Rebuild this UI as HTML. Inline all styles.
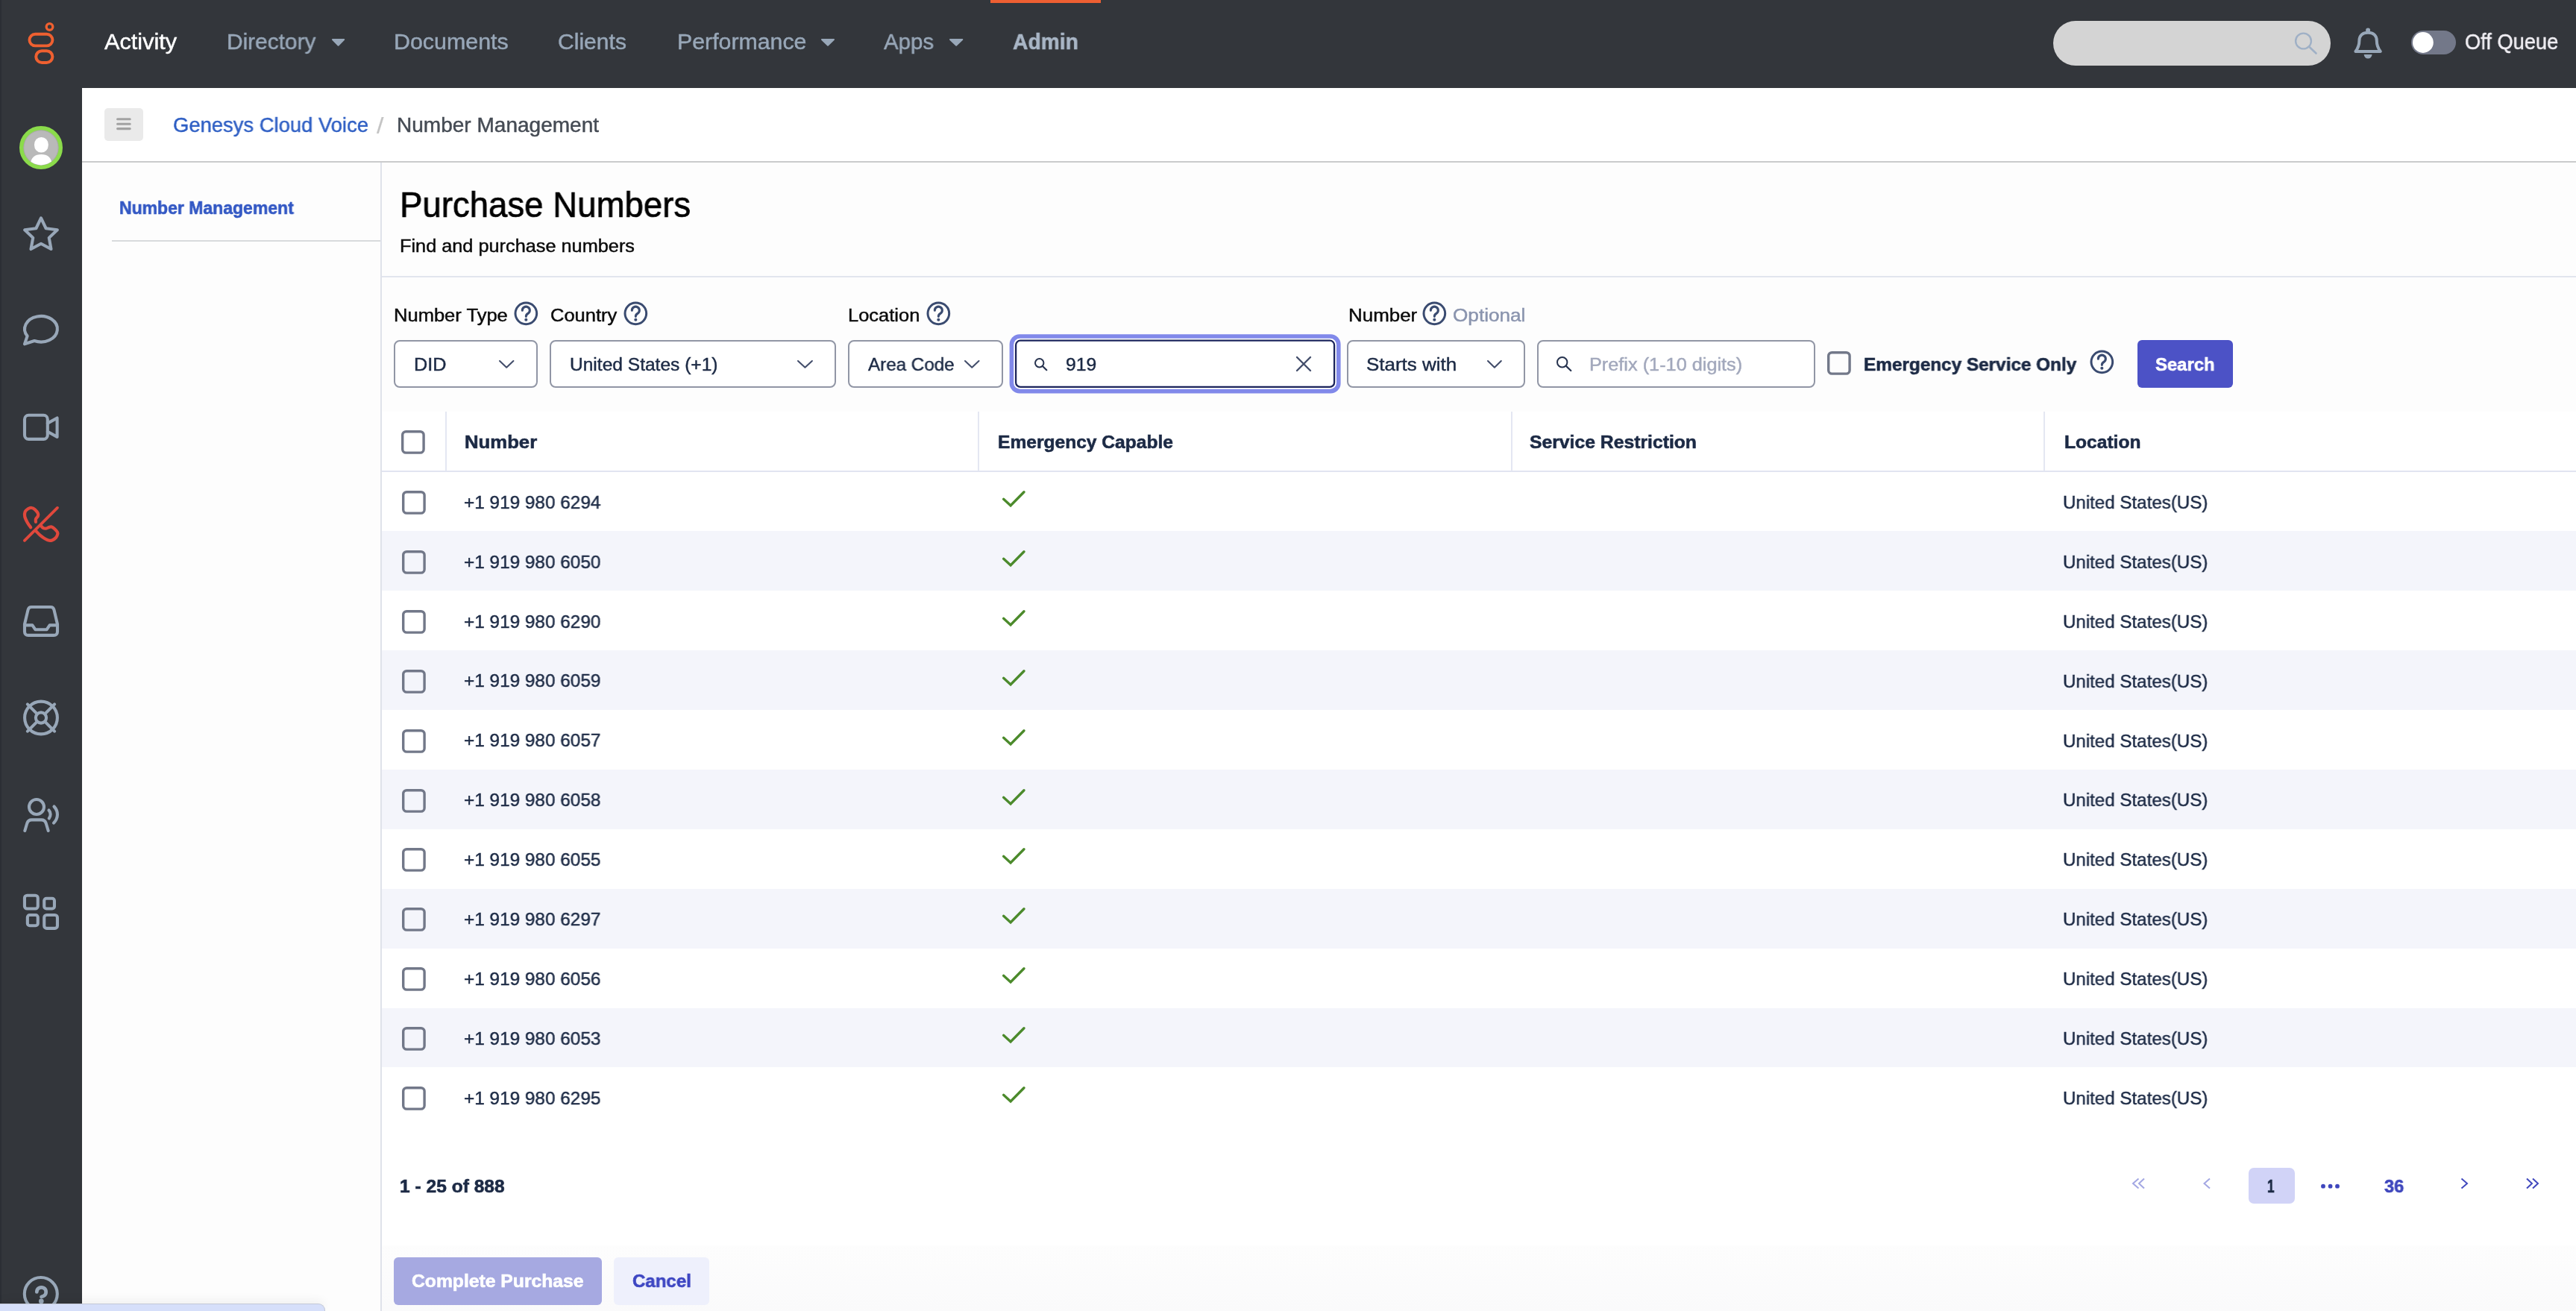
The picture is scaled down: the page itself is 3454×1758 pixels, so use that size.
<!DOCTYPE html>
<html><head><meta charset="utf-8"><title>Number Management</title>
<style>
html,body{margin:0;padding:0;background:#fdfdfd;}
html{width:3454px;height:1758px;overflow:hidden;}
body{width:3454px;height:1758px;position:relative;overflow:hidden;font-family:"Liberation Sans",sans-serif;}
.b{position:absolute;display:block;}
.t{position:absolute;white-space:nowrap;line-height:1;transform-origin:0 0;will-change:transform;}
</style></head><body>
<div class="b" style="left:110px;top:118px;width:3344px;height:1640px;background:#fdfdfd"></div>
<div class="b" style="left:110px;top:118px;width:3344px;height:97.5px;background:#ffffff"></div>
<div class="b" style="left:110px;top:215.5px;width:3344px;height:2px;background:#cacbcc"></div>
<div class="b" style="left:510px;top:217.5px;width:2px;height:1540.5px;background:#dfe2ea"></div>
<div class="b" style="left:150px;top:322px;width:360px;height:2px;background:#d8dadd"></div>
<div class="b" style="left:512px;top:369.5px;width:2942px;height:2px;background:#e2e5ee"></div>
<div class="b" style="left:512px;top:1670px;width:2942px;height:88px;background:linear-gradient(180deg,#fdfdfd,#fafafb)"></div>
<div class="b" style="left:512px;top:552px;width:2942px;height:1118px;background:#ffffff"></div>
<div class="b" style="left:512px;top:631px;width:2942px;height:2px;background:#e1e4f1"></div>
<div class="b" style="left:597px;top:552px;width:2px;height:79px;background:#e4e7f2"></div>
<div class="b" style="left:1311px;top:552px;width:2px;height:79px;background:#e4e7f2"></div>
<div class="b" style="left:2026px;top:552px;width:2px;height:79px;background:#e4e7f2"></div>
<div class="b" style="left:2740px;top:552px;width:2px;height:79px;background:#e4e7f2"></div>
<svg class="b" style="left:537.6px;top:657.1px" width="33.8" height="33.8" viewBox="537.6 657.1 33.8 33.8" ><rect x="540.3" y="659.8" width="28.4" height="28.4" rx="4.6" fill="none" stroke="#727889" stroke-width="3.4"/></svg>
<svg class="b" style="left:1341.4px;top:655.2px" width="36.8" height="27.8" viewBox="1341.4 655.2 36.8 27.8" ><path d="M1346 669.536 L1355.49 678.2 L1373.4 660" fill="none" stroke="#4b8a2b" stroke-width="3.4" stroke-linecap="round" stroke-linejoin="miter"/></svg>
<div class="b" style="left:512px;top:711.95px;width:2942px;height:79.95px;background:#f4f5fb"></div>
<svg class="b" style="left:537.6px;top:736.98px" width="33.8" height="33.8" viewBox="537.6 736.98 33.8 33.8" ><rect x="540.3" y="739.68" width="28.4" height="28.4" rx="4.6" fill="none" stroke="#727889" stroke-width="3.4"/></svg>
<svg class="b" style="left:1341.4px;top:735.08px" width="36.8" height="27.8" viewBox="1341.4 735.08 36.8 27.8" ><path d="M1346 749.416 L1355.49 758.08 L1373.4 739.88" fill="none" stroke="#4b8a2b" stroke-width="3.4" stroke-linecap="round" stroke-linejoin="miter"/></svg>
<svg class="b" style="left:537.6px;top:816.86px" width="33.8" height="33.8" viewBox="537.6 816.86 33.8 33.8" ><rect x="540.3" y="819.56" width="28.4" height="28.4" rx="4.6" fill="none" stroke="#727889" stroke-width="3.4"/></svg>
<svg class="b" style="left:1341.4px;top:814.96px" width="36.8" height="27.8" viewBox="1341.4 814.96 36.8 27.8" ><path d="M1346 829.296 L1355.49 837.96 L1373.4 819.76" fill="none" stroke="#4b8a2b" stroke-width="3.4" stroke-linecap="round" stroke-linejoin="miter"/></svg>
<div class="b" style="left:512px;top:871.85px;width:2942px;height:79.95px;background:#f4f5fb"></div>
<svg class="b" style="left:537.6px;top:896.74px" width="33.8" height="33.8" viewBox="537.6 896.74 33.8 33.8" ><rect x="540.3" y="899.44" width="28.4" height="28.4" rx="4.6" fill="none" stroke="#727889" stroke-width="3.4"/></svg>
<svg class="b" style="left:1341.4px;top:894.84px" width="36.8" height="27.8" viewBox="1341.4 894.84 36.8 27.8" ><path d="M1346 909.176 L1355.49 917.84 L1373.4 899.64" fill="none" stroke="#4b8a2b" stroke-width="3.4" stroke-linecap="round" stroke-linejoin="miter"/></svg>
<svg class="b" style="left:537.6px;top:976.62px" width="33.8" height="33.8" viewBox="537.6 976.62 33.8 33.8" ><rect x="540.3" y="979.32" width="28.4" height="28.4" rx="4.6" fill="none" stroke="#727889" stroke-width="3.4"/></svg>
<svg class="b" style="left:1341.4px;top:974.72px" width="36.8" height="27.8" viewBox="1341.4 974.72 36.8 27.8" ><path d="M1346 989.056 L1355.49 997.72 L1373.4 979.52" fill="none" stroke="#4b8a2b" stroke-width="3.4" stroke-linecap="round" stroke-linejoin="miter"/></svg>
<div class="b" style="left:512px;top:1031.75px;width:2942px;height:79.95px;background:#f4f5fb"></div>
<svg class="b" style="left:537.6px;top:1056.5px" width="33.8" height="33.8" viewBox="537.6 1056.5 33.8 33.8" ><rect x="540.3" y="1059.2" width="28.4" height="28.4" rx="4.6" fill="none" stroke="#727889" stroke-width="3.4"/></svg>
<svg class="b" style="left:1341.4px;top:1054.6px" width="36.8" height="27.8" viewBox="1341.4 1054.6 36.8 27.8" ><path d="M1346 1068.94 L1355.49 1077.6 L1373.4 1059.4" fill="none" stroke="#4b8a2b" stroke-width="3.4" stroke-linecap="round" stroke-linejoin="miter"/></svg>
<svg class="b" style="left:537.6px;top:1136.38px" width="33.8" height="33.8" viewBox="537.6 1136.38 33.8 33.8" ><rect x="540.3" y="1139.08" width="28.4" height="28.4" rx="4.6" fill="none" stroke="#727889" stroke-width="3.4"/></svg>
<svg class="b" style="left:1341.4px;top:1134.48px" width="36.8" height="27.8" viewBox="1341.4 1134.48 36.8 27.8" ><path d="M1346 1148.82 L1355.49 1157.48 L1373.4 1139.28" fill="none" stroke="#4b8a2b" stroke-width="3.4" stroke-linecap="round" stroke-linejoin="miter"/></svg>
<div class="b" style="left:512px;top:1191.65px;width:2942px;height:79.95px;background:#f4f5fb"></div>
<svg class="b" style="left:537.6px;top:1216.26px" width="33.8" height="33.8" viewBox="537.6 1216.26 33.8 33.8" ><rect x="540.3" y="1218.96" width="28.4" height="28.4" rx="4.6" fill="none" stroke="#727889" stroke-width="3.4"/></svg>
<svg class="b" style="left:1341.4px;top:1214.36px" width="36.8" height="27.8" viewBox="1341.4 1214.36 36.8 27.8" ><path d="M1346 1228.7 L1355.49 1237.36 L1373.4 1219.16" fill="none" stroke="#4b8a2b" stroke-width="3.4" stroke-linecap="round" stroke-linejoin="miter"/></svg>
<svg class="b" style="left:537.6px;top:1296.14px" width="33.8" height="33.8" viewBox="537.6 1296.14 33.8 33.8" ><rect x="540.3" y="1298.84" width="28.4" height="28.4" rx="4.6" fill="none" stroke="#727889" stroke-width="3.4"/></svg>
<svg class="b" style="left:1341.4px;top:1294.24px" width="36.8" height="27.8" viewBox="1341.4 1294.24 36.8 27.8" ><path d="M1346 1308.58 L1355.49 1317.24 L1373.4 1299.04" fill="none" stroke="#4b8a2b" stroke-width="3.4" stroke-linecap="round" stroke-linejoin="miter"/></svg>
<div class="b" style="left:512px;top:1351.55px;width:2942px;height:79.95px;background:#f4f5fb"></div>
<svg class="b" style="left:537.6px;top:1376.02px" width="33.8" height="33.8" viewBox="537.6 1376.02 33.8 33.8" ><rect x="540.3" y="1378.72" width="28.4" height="28.4" rx="4.6" fill="none" stroke="#727889" stroke-width="3.4"/></svg>
<svg class="b" style="left:1341.4px;top:1374.12px" width="36.8" height="27.8" viewBox="1341.4 1374.12 36.8 27.8" ><path d="M1346 1388.46 L1355.49 1397.12 L1373.4 1378.92" fill="none" stroke="#4b8a2b" stroke-width="3.4" stroke-linecap="round" stroke-linejoin="miter"/></svg>
<svg class="b" style="left:537.6px;top:1455.9px" width="33.8" height="33.8" viewBox="537.6 1455.9 33.8 33.8" ><rect x="540.3" y="1458.6" width="28.4" height="28.4" rx="4.6" fill="none" stroke="#727889" stroke-width="3.4"/></svg>
<svg class="b" style="left:1341.4px;top:1454px" width="36.8" height="27.8" viewBox="1341.4 1454 36.8 27.8" ><path d="M1346 1468.34 L1355.49 1477 L1373.4 1458.8" fill="none" stroke="#4b8a2b" stroke-width="3.4" stroke-linecap="round" stroke-linejoin="miter"/></svg>
<svg class="b" style="left:537px;top:576px" width="33.8" height="33.8" viewBox="537 576 33.8 33.8" ><rect x="539.7" y="578.7" width="28.4" height="28.4" rx="4.6" fill="none" stroke="#727889" stroke-width="3.4"/></svg>
<div class="b" style="left:0px;top:0px;width:3454px;height:118px;background:#33363b"></div>
<div class="b" style="left:0px;top:0px;width:110px;height:1758px;background:#33363b"></div>
<div class="b" style="left:0px;top:0px;width:1.5px;height:1758px;background:#2b2e34"></div>
<div class="b" style="left:1328px;top:0px;width:148px;height:4px;background:#ee5f32"></div>
<svg class="b" style="left:443.8px;top:51px" width="19.2" height="12" viewBox="443.8 51 19.2 12" ><path d="M445.8 53 L461 53 L453.4 60.8 Z" fill="#98a7b8" stroke="#98a7b8" stroke-width="2" stroke-linejoin="round"/></svg>
<svg class="b" style="left:1099.6px;top:51px" width="20" height="12" viewBox="1099.6 51 20 12" ><path d="M1101.6 53 L1117.6 53 L1109.6 60.8 Z" fill="#98a7b8" stroke="#98a7b8" stroke-width="2" stroke-linejoin="round"/></svg>
<svg class="b" style="left:1272.3px;top:51px" width="20.3" height="12" viewBox="1272.3 51 20.3 12" ><path d="M1274.3 53 L1290.6 53 L1282.45 60.8 Z" fill="#98a7b8" stroke="#98a7b8" stroke-width="2" stroke-linejoin="round"/></svg>
<div class="b" style="left:2753px;top:28px;width:372px;height:60px;background:#d4d4d4;border-radius:30px"></div>
<svg class="b" style="left:3070px;top:36px" width="44" height="44" viewBox="3070 36 44 44" ><circle cx="3088.5" cy="55" r="10.4" fill="none" stroke="#9fb0c6" stroke-width="2.4"/><path d="M3096 62.5 L3105.5 71.5" stroke="#9fb0c6" stroke-width="2.6" stroke-linecap="round"/></svg>
<svg class="b" style="left:3150px;top:32px" width="50" height="52" viewBox="3150 32 50 52" ><path d="M3158.4 68.9 C3162.9 63.4 3163.4 59 3163.4 54.6 C3163.4 47.2 3168 43.7 3175.1 43.7 C3182.2 43.7 3186.8 47.2 3186.8 54.6 C3186.8 59 3187.3 63.4 3191.8 68.9 Z" fill="none" stroke="#98a7b8" stroke-width="4" stroke-linejoin="round"/><circle cx="3175.1" cy="40.6" r="3" fill="#98a7b8"/><path d="M3169.7 73.1 A5.4 5.4 0 0 0 3180.5 73.1 Z" fill="#98a7b8"/></svg>
<div class="b" style="left:3233px;top:41px;width:60px;height:32px;background:#737889;border-radius:16px"></div>
<svg class="b" style="left:3232px;top:40px" width="34" height="34" viewBox="3232 40 34 34" ><circle cx="3248.9" cy="57" r="13.9" fill="#fff"/></svg>
<div class="b" style="left:140px;top:145px;width:52px;height:44px;background:#eaeaea;border-radius:5px"></div>
<svg class="b" style="left:150px;top:152px" width="32" height="30" viewBox="150 152 32 30" ><path d="M157.6 159.8 H174.2 M157.6 166.2 H174.2 M157.6 172.6 H174.2" stroke="#a2a2a2" stroke-width="3.1" stroke-linecap="round"/></svg>
<svg class="b" style="left:30px;top:24px" width="52" height="68" viewBox="30 24 52 68" ><circle cx="66.5" cy="35.9" r="4.3" fill="none" stroke="#ef6030" stroke-width="3.4"/><rect x="39.45" y="45.8" width="31" height="15.55" rx="7.78" fill="none" stroke="#ef6030" stroke-width="3.9"/><rect x="48.25" y="68.2" width="22.15" height="15.8" rx="7.9" fill="none" stroke="#ef6030" stroke-width="4"/></svg>
<svg class="b" style="left:22px;top:165px" width="66" height="66" viewBox="22 165 66 66" ><defs><clipPath id="avc"><circle cx="55" cy="198" r="23.4"/></clipPath></defs><circle cx="55" cy="198" r="26.2" fill="#b9b9b9" stroke="#8bdb4b" stroke-width="5.6"/><circle cx="55" cy="198" r="23.2" fill="none" stroke="#a3a3a3" stroke-width="0.8"/><g clip-path="url(#avc)"><rect x="46" y="183.9" width="18.8" height="20.7" rx="9.2" ry="9.8" fill="#fff"/><path d="M40.2 226 C40.2 211.5 46 207 55.3 207 C64.6 207 70.2 211.5 70.2 226 Z" fill="#fff"/></g></svg>
<svg class="b" style="left:28px;top:286px" width="54" height="54" viewBox="28 286 54 54" ><path d="M55.00 292.40 L61.64 306.26 L76.87 308.29 L65.75 318.89 L68.52 334.01 L55.00 326.70 L41.48 334.01 L44.25 318.89 L33.13 308.29 L48.36 306.26 Z" fill="none" stroke="#98a7b8" stroke-width="4.1" stroke-linecap="round" stroke-linejoin="round"/></svg>
<svg class="b" style="left:26px;top:416px" width="58" height="54" viewBox="26 416 58 54" ><path d="M36.63 450.62 A21.9 17.3 0 1 1 46.09 457.00 L33 461.3 Z" fill="none" stroke="#98a7b8" stroke-width="4.1" stroke-linecap="round" stroke-linejoin="round"/></svg>
<svg class="b" style="left:26px;top:548px" width="58" height="50" viewBox="26 548 58 50" ><rect x="33" y="556.8" width="30.8" height="32.1" rx="5.4" fill="none" stroke="#98a7b8" stroke-width="4.1" stroke-linecap="round" stroke-linejoin="round"/><path d="M63.8 567.6 L76.6 560.5 L76.6 585.9 L63.8 578.8" fill="none" stroke="#98a7b8" stroke-width="4.1" stroke-linecap="round" stroke-linejoin="round"/></svg>
<svg class="b" style="left:26px;top:672px" width="58" height="62" viewBox="26 672 58 62" ><path d="M41.20 707.30 C40.43 706.17 37.93 702.97 36.60 700.50 C35.27 698.03 33.68 694.88 33.20 692.50 C32.72 690.12 32.95 687.92 33.70 686.20 C34.45 684.48 36.27 683.07 37.70 682.20 C39.13 681.33 40.77 680.82 42.30 681.00 C43.83 681.18 45.47 682.07 46.90 683.30 C48.33 684.53 50.23 686.97 50.90 688.40 C51.57 689.83 51.38 690.65 50.90 691.90 C50.42 693.15 48.50 694.57 48.00 695.90 C47.50 697.23 47.92 699.23 47.90 699.90" fill="none" stroke="#e0483c" stroke-width="4.2" stroke-linecap="round" stroke-linejoin="round"/><path d="M54.90 705.00 C55.37 705.48 56.57 707.28 57.70 707.90 C58.83 708.52 60.35 708.85 61.70 708.70 C63.05 708.55 64.55 707.37 65.80 707.00 C67.05 706.63 67.97 706.12 69.20 706.50 C70.43 706.88 71.92 708.12 73.20 709.30 C74.48 710.48 76.23 712.40 76.90 713.60 C77.57 714.80 77.53 715.27 77.20 716.50 C76.87 717.73 76.05 719.72 74.90 721.00 C73.75 722.28 71.82 723.57 70.30 724.20 C68.78 724.83 67.52 725.13 65.80 724.80 C64.08 724.47 61.92 723.30 60.00 722.20 C58.08 721.10 56.02 719.63 54.30 718.20 C52.58 716.77 50.75 714.70 49.70 713.60 C48.65 712.50 48.28 711.93 48.00 711.60" fill="none" stroke="#e0483c" stroke-width="4.2" stroke-linecap="round" stroke-linejoin="round"/><path d="M32.9 724.8 L77 680.9" fill="none" stroke="#e0483c" stroke-width="3.8" stroke-linecap="round"/></svg>
<svg class="b" style="left:26px;top:806px" width="58" height="54" viewBox="26 806 58 54" ><path d="M33 837 L37.6 817.6 C38.2 815.2 39.8 814 42.2 814 L67.8 814 C70.2 814 71.8 815.2 72.4 817.6 L77 837 L77 847 C77 850 75.2 851.9 72.2 851.9 L37.8 851.9 C34.8 851.9 33 850 33 847 Z" fill="none" stroke="#98a7b8" stroke-width="4.1" stroke-linecap="round" stroke-linejoin="round"/><path d="M34 838.4 L43.4 838.4 L47.3 844.2 L62.7 844.2 L66.6 838.4 L76 838.4" fill="none" stroke="#98a7b8" stroke-width="4.1" stroke-linecap="round" stroke-linejoin="round"/></svg>
<svg class="b" style="left:26px;top:934px" width="58" height="58" viewBox="26 934 58 58" ><circle cx="55" cy="962.5" r="21.9" fill="none" stroke="#98a7b8" stroke-width="4.1" stroke-linecap="round" stroke-linejoin="round"/><circle cx="55" cy="962.5" r="7.1" fill="none" stroke="#98a7b8" stroke-width="4.1" stroke-linecap="round" stroke-linejoin="round"/><path d="M60.66 968.16 L73.10 980.60 M49.34 968.16 L36.90 980.60 M49.34 956.84 L36.90 944.40 M60.66 956.84 L73.10 944.40 " fill="none" stroke="#98a7b8" stroke-width="4.1" stroke-linecap="round" stroke-linejoin="round"/></svg>
<svg class="b" style="left:28px;top:1064px" width="54" height="58" viewBox="28 1064 54 58" ><circle cx="49" cy="1082" r="10" fill="none" stroke="#98a7b8" stroke-width="4.1" stroke-linecap="round" stroke-linejoin="round"/><path d="M33.3 1114 L36.3 1104 C37.5 1100.6 39.6 1099.4 42.6 1099.4 L55.4 1099.4 C58.4 1099.4 60.5 1100.6 61.7 1104 L64.7 1114" fill="none" stroke="#98a7b8" stroke-width="4.1" stroke-linecap="round" stroke-linejoin="round"/><path d="M65.5 1086.5 C68.3 1089.5 68.3 1094.3 65.8 1097.4" fill="none" stroke="#98a7b8" stroke-width="4.1" stroke-linecap="round" stroke-linejoin="round"/><path d="M72.5 1081.5 C78.5 1088 78.5 1096.8 72 1103.6" fill="none" stroke="#98a7b8" stroke-width="4.1" stroke-linecap="round" stroke-linejoin="round"/></svg>
<svg class="b" style="left:28px;top:1194px" width="56" height="58" viewBox="28 1194 56 58" ><rect x="32.95" y="1200.8" width="17.8" height="17.75" rx="3.4" fill="none" stroke="#98a7b8" stroke-width="4.1" stroke-linecap="round" stroke-linejoin="round"/><rect x="59.25" y="1204.75" width="13.7" height="13.8" rx="3" fill="none" stroke="#98a7b8" stroke-width="4.1" stroke-linecap="round" stroke-linejoin="round"/><rect x="36.85" y="1227.05" width="13.9" height="14.2" rx="3" fill="none" stroke="#98a7b8" stroke-width="4.1" stroke-linecap="round" stroke-linejoin="round"/><rect x="59.25" y="1227.05" width="17.7" height="17.8" rx="3.4" fill="none" stroke="#98a7b8" stroke-width="4.1" stroke-linecap="round" stroke-linejoin="round"/></svg>
<svg class="b" style="left:26px;top:1705px" width="58" height="53" viewBox="26 1705 58 53" ><circle cx="54.8" cy="1735" r="22" fill="none" stroke="#98a7b8" stroke-width="4.1" stroke-linecap="round" stroke-linejoin="round"/><path d="M49.3 1732.4 a6.2 6.1 0 1 1 9.3 5.3 c-1.9 1.1 -3.1 1.1 -3.1 1.4" fill="none" stroke="#98a7b8" stroke-width="4.7" stroke-linecap="round" stroke-linejoin="round"/><circle cx="55.3" cy="1744.9" r="3.3" fill="#98a7b8"/></svg>
<div class="b" style="left:0px;top:1747.5px;width:436px;height:10.5px;background:#d6dffa;border-top:1.5px solid #c3c8d6;border-right:1.5px solid #c3c8d6;border-top-right-radius:9px;box-sizing:border-box;box-shadow:0 -3px 14px rgba(0,0,0,0.07)"></div>
<svg class="b" style="left:687.65px;top:402.65px" width="34.7" height="34.7" viewBox="687.65 402.65 34.7 34.7" ><circle cx="705" cy="420" r="14.35" fill="none" stroke="#3a4b70" stroke-width="3"/><path d="M700 415.8 a5 5 0 1 1 7.6 4.3 c-1.8 1.1 -2.6 2 -2.6 3.9" fill="none" stroke="#3a4b70" stroke-width="3.1" stroke-linecap="round"/><circle cx="705" cy="428.4" r="2.05" fill="#3a4b70"/></svg>
<svg class="b" style="left:834.65px;top:402.65px" width="34.7" height="34.7" viewBox="834.65 402.65 34.7 34.7" ><circle cx="852" cy="420" r="14.35" fill="none" stroke="#3a4b70" stroke-width="3"/><path d="M847 415.8 a5 5 0 1 1 7.6 4.3 c-1.8 1.1 -2.6 2 -2.6 3.9" fill="none" stroke="#3a4b70" stroke-width="3.1" stroke-linecap="round"/><circle cx="852" cy="428.4" r="2.05" fill="#3a4b70"/></svg>
<svg class="b" style="left:1240.65px;top:402.65px" width="34.7" height="34.7" viewBox="1240.65 402.65 34.7 34.7" ><circle cx="1258" cy="420" r="14.35" fill="none" stroke="#3a4b70" stroke-width="3"/><path d="M1253 415.8 a5 5 0 1 1 7.6 4.3 c-1.8 1.1 -2.6 2 -2.6 3.9" fill="none" stroke="#3a4b70" stroke-width="3.1" stroke-linecap="round"/><circle cx="1258" cy="428.4" r="2.05" fill="#3a4b70"/></svg>
<svg class="b" style="left:1906.45px;top:402.65px" width="34.7" height="34.7" viewBox="1906.45 402.65 34.7 34.7" ><circle cx="1923.8" cy="420" r="14.35" fill="none" stroke="#3a4b70" stroke-width="3"/><path d="M1918.8 415.8 a5 5 0 1 1 7.6 4.3 c-1.8 1.1 -2.6 2 -2.6 3.9" fill="none" stroke="#3a4b70" stroke-width="3.1" stroke-linecap="round"/><circle cx="1923.8" cy="428.4" r="2.05" fill="#3a4b70"/></svg>
<svg class="b" style="left:2801.05px;top:468.45px" width="34.7" height="34.7" viewBox="2801.05 468.45 34.7 34.7" ><circle cx="2818.4" cy="485.8" r="14.35" fill="none" stroke="#3a4b70" stroke-width="3"/><path d="M2813.4 481.6 a5 5 0 1 1 7.6 4.3 c-1.8 1.1 -2.6 2 -2.6 3.9" fill="none" stroke="#3a4b70" stroke-width="3.1" stroke-linecap="round"/><circle cx="2818.4" cy="494.2" r="2.05" fill="#3a4b70"/></svg>
<div class="b" style="left:528px;top:456px;width:193px;height:64px;box-sizing:border-box;border:2px solid #9196a5;border-radius:8px;background:#fff"></div>
<svg class="b" style="left:666px;top:479.7px" width="26.4" height="16.7" viewBox="666 479.7 26.4 16.7" ><path d="M670 483.7 L679.2 492.4 L688.4 483.7" fill="none" stroke="#434e6b" stroke-width="2.1" stroke-linecap="round" stroke-linejoin="round"/></svg>
<div class="b" style="left:737px;top:456px;width:384px;height:64px;box-sizing:border-box;border:2px solid #9196a5;border-radius:8px;background:#fff"></div>
<svg class="b" style="left:1065.5px;top:479.7px" width="26.9" height="16.7" viewBox="1065.5 479.7 26.9 16.7" ><path d="M1069.5 483.7 L1078.95 492.4 L1088.4 483.7" fill="none" stroke="#434e6b" stroke-width="2.1" stroke-linecap="round" stroke-linejoin="round"/></svg>
<div class="b" style="left:1137px;top:456px;width:208px;height:64px;box-sizing:border-box;border:2px solid #9196a5;border-radius:8px;background:#fff"></div>
<svg class="b" style="left:1290px;top:479.7px" width="26.5" height="16.7" viewBox="1290 479.7 26.5 16.7" ><path d="M1294 483.7 L1303.25 492.4 L1312.5 483.7" fill="none" stroke="#434e6b" stroke-width="2.1" stroke-linecap="round" stroke-linejoin="round"/></svg>
<svg class="b" style="left:1350px;top:445px" width="452" height="86" viewBox="1350 445 452 86" ><rect x="1353.6" y="448.2" width="444" height="79.2" rx="13.5" fill="#8189ea"/><rect x="1359.2" y="453.8" width="432.8" height="68" rx="8.5" fill="#fff"/><rect x="1362.1" y="456.7" width="427" height="62.2" rx="6" fill="#fff" stroke="#1b245c" stroke-width="2.3"/></svg>
<svg class="b" style="left:1385.3px;top:478px" width="21.3" height="21.2" viewBox="1385.3 478 21.3 21.2" ><circle cx="1394.01" cy="486.709" r="5.709" fill="none" stroke="#27334f" stroke-width="2"/><path d="M1398.23 490.934 L1403.6 496.2" stroke="#27334f" stroke-width="2.2" stroke-linecap="round"/></svg>
<svg class="b" style="left:1734px;top:474px" width="28" height="28" viewBox="1734 474 28 28" ><path d="M1739 479 L1757 497 M1757 479 L1739 497" stroke="#434e6b" stroke-width="2.4" stroke-linecap="round"/></svg>
<div class="b" style="left:1806px;top:456px;width:239px;height:64px;box-sizing:border-box;border:2px solid #9196a5;border-radius:8px;background:#fff"></div>
<svg class="b" style="left:1990.7px;top:479.7px" width="25.8" height="16.7" viewBox="1990.7 479.7 25.8 16.7" ><path d="M1994.7 483.7 L2003.6 492.4 L2012.5 483.7" fill="none" stroke="#434e6b" stroke-width="2.1" stroke-linecap="round" stroke-linejoin="round"/></svg>
<div class="b" style="left:2061px;top:456px;width:373px;height:64px;box-sizing:border-box;border:2px solid #9196a5;border-radius:8px;background:#fff"></div>
<svg class="b" style="left:2084.9px;top:476.2px" width="24.3" height="24" viewBox="2084.9 476.2 24.3 24" ><circle cx="2094.6" cy="485.899" r="6.699" fill="none" stroke="#27334f" stroke-width="2"/><path d="M2099.56 490.856 L2106.2 497.2" stroke="#27334f" stroke-width="2.2" stroke-linecap="round"/></svg>
<svg class="b" style="left:2449px;top:469.8px" width="33.8" height="33.8" viewBox="2449 469.8 33.8 33.8" ><rect x="2451.7" y="472.5" width="28.4" height="28.4" rx="4.6" fill="none" stroke="#727889" stroke-width="3.4"/></svg>
<div class="b" style="left:2866px;top:456px;width:128px;height:64px;background:#4c52c6;border-radius:6px"></div>
<svg class="b" style="left:2850px;top:1570px" width="40" height="34" viewBox="2850 1570 40 34" ><path d="M2867.5 1580.4 L2860 1587 L2867.5 1593.6" fill="none" stroke="#a3a7e3" stroke-width="2.0" stroke-linecap="butt" stroke-linejoin="miter"/><path d="M2875 1580.4 L2868 1587 L2875 1593.6" fill="none" stroke="#a3a7e3" stroke-width="2.0" stroke-linecap="butt" stroke-linejoin="miter"/></svg>
<svg class="b" style="left:2945px;top:1570px" width="30" height="34" viewBox="2945 1570 30 34" ><path d="M2963 1580.4 L2955.5 1587 L2963 1593.6" fill="none" stroke="#a3a7e3" stroke-width="2.0" stroke-linecap="butt" stroke-linejoin="miter"/></svg>
<div class="b" style="left:3015.2px;top:1566.2px;width:61.5px;height:47.4px;background:#d1d3f7;border-radius:7px"></div>
<svg class="b" style="left:3108px;top:1584px" width="34" height="14" viewBox="3108 1584 34 14" ><circle cx="3115" cy="1590.7" r="2.9" fill="#3f47bd"/><circle cx="3124.6" cy="1590.7" r="2.9" fill="#3f47bd"/><circle cx="3134" cy="1590.7" r="2.9" fill="#3f47bd"/></svg>
<svg class="b" style="left:3290px;top:1570px" width="30" height="34" viewBox="3290 1570 30 34" ><path d="M3300.5 1580.4 L3308 1587 L3300.5 1593.6" fill="none" stroke="#3f47bd" stroke-width="2.0" stroke-linecap="butt" stroke-linejoin="miter"/></svg>
<svg class="b" style="left:3378px;top:1570px" width="40" height="34" viewBox="3378 1570 40 34" ><path d="M3388 1580.4 L3395 1587 L3388 1593.6" fill="none" stroke="#3f47bd" stroke-width="2.0" stroke-linecap="butt" stroke-linejoin="miter"/><path d="M3396 1580.4 L3403 1587 L3396 1593.6" fill="none" stroke="#3f47bd" stroke-width="2.0" stroke-linecap="butt" stroke-linejoin="miter"/></svg>
<div class="b" style="left:528.2px;top:1686px;width:278.4px;height:63.5px;background:#a6a9e1;border-radius:6px"></div>
<div class="b" style="left:823px;top:1686px;width:128px;height:63.5px;background:#eef0fc;border-radius:6px"></div>
<span class="t" id="n1" style="left:140.01px;top:40.61px;font-size:30px;color:#ffffff;-webkit-text-stroke:0.45px #ffffff;transform:scaleX(1.0232)">Activity</span>
<span class="t" id="n2" style="left:304.01px;top:40.61px;font-size:30px;color:#98a7b8;-webkit-text-stroke:0.45px #98a7b8;transform:scaleX(0.9950)">Directory</span>
<span class="t" id="n3" style="left:527.97px;top:40.61px;font-size:30px;color:#98a7b8;-webkit-text-stroke:0.45px #98a7b8;transform:scaleX(1.0134)">Documents</span>
<span class="t" id="n4" style="left:748.00px;top:40.61px;font-size:30px;color:#98a7b8;-webkit-text-stroke:0.45px #98a7b8;transform:scaleX(1.0023)">Clients</span>
<span class="t" id="n5" style="left:907.98px;top:40.61px;font-size:30px;color:#98a7b8;-webkit-text-stroke:0.45px #98a7b8;transform:scaleX(1.0095)">Performance</span>
<span class="t" id="n6" style="left:1185.00px;top:40.61px;font-size:30px;color:#98a7b8;-webkit-text-stroke:0.45px #98a7b8;transform:scaleX(0.9796)">Apps</span>
<span class="t" id="n7" style="left:1357.98px;top:40.61px;font-size:30px;color:#a9b6c6;font-weight:bold;-webkit-text-stroke:0.6px #a9b6c6;transform:scaleX(0.9413)">Admin</span>
<span class="t" id="oq" style="left:3304.59px;top:41.55px;font-size:29px;color:#f1eff4;-webkit-text-stroke:0.45px #f1eff4;transform:scaleX(0.9394)">Off Queue</span>
<span class="t" id="b1" style="left:232.00px;top:153.52px;font-size:27.5px;color:#2f5fc4;-webkit-text-stroke:0.45px #2f5fc4;transform:scaleX(0.9962)">Genesys Cloud Voice</span>
<span class="t" id="b2" style="left:504.53px;top:153.80px;font-size:29.3px;color:#c4c4c4;-webkit-text-stroke:0.2px #c4c4c4;transform:scaleX(1.1562)">/</span>
<span class="t" id="b3" style="left:532.45px;top:153.52px;font-size:27.5px;color:#454b54;-webkit-text-stroke:0.45px #454b54;transform:scaleX(1.0190)">Number Management</span>
<span class="t" id="l1" style="left:159.55px;top:266.61px;font-size:24.8px;color:#3358c4;font-weight:bold;-webkit-text-stroke:0.6px #3358c4;transform:scaleX(0.9270)">Number Management</span>
<span class="t" id="h1" style="left:536.14px;top:250.71px;font-size:47.6px;color:#000000;-webkit-text-stroke:0.7px #000000;transform:scaleX(0.9578)">Purchase Numbers</span>
<span class="t" id="h2" style="left:535.97px;top:318.35px;font-size:24.4px;color:#0a0a0a;-webkit-text-stroke:0.45px #0a0a0a;transform:scaleX(1.0371)">Find and purchase numbers</span>
<span class="t" id="f1" style="left:528.46px;top:411.25px;font-size:24.4px;color:#0a0a0a;-webkit-text-stroke:0.45px #0a0a0a;transform:scaleX(1.0469)">Number Type</span>
<span class="t" id="f2" style="left:737.94px;top:411.25px;font-size:24.4px;color:#0a0a0a;-webkit-text-stroke:0.45px #0a0a0a;transform:scaleX(1.0447)">Country</span>
<span class="t" id="f3" style="left:1137.43px;top:411.25px;font-size:24.4px;color:#0a0a0a;-webkit-text-stroke:0.45px #0a0a0a;transform:scaleX(1.0444)">Location</span>
<span class="t" id="f4" style="left:1807.95px;top:411.25px;font-size:24.4px;color:#0a0a0a;-webkit-text-stroke:0.45px #0a0a0a;transform:scaleX(1.0628)">Number</span>
<span class="t" id="f5" style="left:1947.95px;top:411.25px;font-size:24.4px;color:#8a94ae;-webkit-text-stroke:0.45px #8a94ae;transform:scaleX(1.0720)">Optional</span>
<span class="t" id="i1" style="left:554.97px;top:477.35px;font-size:24.4px;color:#1c2a45;-webkit-text-stroke:0.45px #1c2a45;transform:scaleX(1.0346)">DID</span>
<span class="t" id="i2" style="left:764.00px;top:477.35px;font-size:24.4px;color:#1c2a45;-webkit-text-stroke:0.45px #1c2a45;transform:scaleX(1.0062)">United States (+1)</span>
<span class="t" id="i3" style="left:1163.50px;top:477.35px;font-size:24.4px;color:#1c2a45;-webkit-text-stroke:0.45px #1c2a45;transform:scaleX(0.9914)">Area Code</span>
<span class="t" id="i4" style="left:1428.99px;top:477.35px;font-size:24.4px;color:#1c2a45;-webkit-text-stroke:0.45px #1c2a45;transform:scaleX(1.0105)">919</span>
<span class="t" id="i5" style="left:1831.91px;top:477.35px;font-size:24.4px;color:#1c2a45;-webkit-text-stroke:0.45px #1c2a45;transform:scaleX(1.0643)">Starts with</span>
<span class="t" id="i6" style="left:2130.98px;top:477.35px;font-size:24.4px;color:#a2a8bc;-webkit-text-stroke:0.45px #a2a8bc;transform:scaleX(1.0367)">Prefix (1-10 digits)</span>
<span class="t" id="i7" style="left:2499.00px;top:476.85px;font-size:24.4px;color:#1c2a45;font-weight:bold;-webkit-text-stroke:0.6px #1c2a45;transform:scaleX(0.9972)">Emergency Service Only</span>
<span class="t" id="i8" style="left:2889.51px;top:477.35px;font-size:24.4px;color:#ffffff;font-weight:bold;-webkit-text-stroke:0.6px #ffffff;transform:scaleX(0.9778)">Search</span>
<span class="t" id="th1" style="left:622.96px;top:581.25px;font-size:24.4px;color:#1c2a45;font-weight:bold;-webkit-text-stroke:0.6px #1c2a45;transform:scaleX(1.0543)">Number</span>
<span class="t" id="th2" style="left:1337.99px;top:581.25px;font-size:24.4px;color:#1c2a45;font-weight:bold;-webkit-text-stroke:0.6px #1c2a45;transform:scaleX(1.0078)">Emergency Capable</span>
<span class="t" id="th3" style="left:2051.00px;top:581.25px;font-size:24.4px;color:#1c2a45;font-weight:bold;-webkit-text-stroke:0.6px #1c2a45;transform:scaleX(1.0136)">Service Restriction</span>
<span class="t" id="th4" style="left:2767.99px;top:581.25px;font-size:24.4px;color:#1c2a45;font-weight:bold;-webkit-text-stroke:0.6px #1c2a45;transform:scaleX(1.0080)">Location</span>
<span class="t" id="r0a" style="left:621.50px;top:661.75px;font-size:24.4px;color:#1c2a45;-webkit-text-stroke:0.45px #1c2a45;transform:scaleX(0.9978)">+1 919 980 6294</span>
<span class="t" id="r0b" style="left:2766.01px;top:662.05px;font-size:24.4px;color:#1c2a45;-webkit-text-stroke:0.45px #1c2a45;transform:scaleX(0.9887)">United States(US)</span>
<span class="t" id="r1a" style="left:621.50px;top:741.63px;font-size:24.4px;color:#1c2a45;-webkit-text-stroke:0.45px #1c2a45;transform:scaleX(0.9978)">+1 919 980 6050</span>
<span class="t" id="r1b" style="left:2766.01px;top:741.93px;font-size:24.4px;color:#1c2a45;-webkit-text-stroke:0.45px #1c2a45;transform:scaleX(0.9887)">United States(US)</span>
<span class="t" id="r2a" style="left:621.50px;top:821.51px;font-size:24.4px;color:#1c2a45;-webkit-text-stroke:0.45px #1c2a45;transform:scaleX(0.9978)">+1 919 980 6290</span>
<span class="t" id="r2b" style="left:2766.01px;top:821.81px;font-size:24.4px;color:#1c2a45;-webkit-text-stroke:0.45px #1c2a45;transform:scaleX(0.9887)">United States(US)</span>
<span class="t" id="r3a" style="left:621.50px;top:901.39px;font-size:24.4px;color:#1c2a45;-webkit-text-stroke:0.45px #1c2a45;transform:scaleX(0.9978)">+1 919 980 6059</span>
<span class="t" id="r3b" style="left:2766.01px;top:901.69px;font-size:24.4px;color:#1c2a45;-webkit-text-stroke:0.45px #1c2a45;transform:scaleX(0.9887)">United States(US)</span>
<span class="t" id="r4a" style="left:621.50px;top:981.27px;font-size:24.4px;color:#1c2a45;-webkit-text-stroke:0.45px #1c2a45;transform:scaleX(0.9978)">+1 919 980 6057</span>
<span class="t" id="r4b" style="left:2766.01px;top:981.57px;font-size:24.4px;color:#1c2a45;-webkit-text-stroke:0.45px #1c2a45;transform:scaleX(0.9887)">United States(US)</span>
<span class="t" id="r5a" style="left:621.50px;top:1061.15px;font-size:24.4px;color:#1c2a45;-webkit-text-stroke:0.45px #1c2a45;transform:scaleX(0.9978)">+1 919 980 6058</span>
<span class="t" id="r5b" style="left:2766.01px;top:1061.45px;font-size:24.4px;color:#1c2a45;-webkit-text-stroke:0.45px #1c2a45;transform:scaleX(0.9887)">United States(US)</span>
<span class="t" id="r6a" style="left:621.50px;top:1141.03px;font-size:24.4px;color:#1c2a45;-webkit-text-stroke:0.45px #1c2a45;transform:scaleX(0.9978)">+1 919 980 6055</span>
<span class="t" id="r6b" style="left:2766.01px;top:1141.33px;font-size:24.4px;color:#1c2a45;-webkit-text-stroke:0.45px #1c2a45;transform:scaleX(0.9887)">United States(US)</span>
<span class="t" id="r7a" style="left:621.50px;top:1220.91px;font-size:24.4px;color:#1c2a45;-webkit-text-stroke:0.45px #1c2a45;transform:scaleX(0.9978)">+1 919 980 6297</span>
<span class="t" id="r7b" style="left:2766.01px;top:1221.21px;font-size:24.4px;color:#1c2a45;-webkit-text-stroke:0.45px #1c2a45;transform:scaleX(0.9887)">United States(US)</span>
<span class="t" id="r8a" style="left:621.50px;top:1300.79px;font-size:24.4px;color:#1c2a45;-webkit-text-stroke:0.45px #1c2a45;transform:scaleX(0.9978)">+1 919 980 6056</span>
<span class="t" id="r8b" style="left:2766.01px;top:1301.09px;font-size:24.4px;color:#1c2a45;-webkit-text-stroke:0.45px #1c2a45;transform:scaleX(0.9887)">United States(US)</span>
<span class="t" id="r9a" style="left:621.50px;top:1380.67px;font-size:24.4px;color:#1c2a45;-webkit-text-stroke:0.45px #1c2a45;transform:scaleX(0.9978)">+1 919 980 6053</span>
<span class="t" id="r9b" style="left:2766.01px;top:1380.97px;font-size:24.4px;color:#1c2a45;-webkit-text-stroke:0.45px #1c2a45;transform:scaleX(0.9887)">United States(US)</span>
<span class="t" id="r10a" style="left:621.50px;top:1460.55px;font-size:24.4px;color:#1c2a45;-webkit-text-stroke:0.45px #1c2a45;transform:scaleX(0.9978)">+1 919 980 6295</span>
<span class="t" id="r10b" style="left:2766.01px;top:1460.85px;font-size:24.4px;color:#1c2a45;-webkit-text-stroke:0.45px #1c2a45;transform:scaleX(0.9887)">United States(US)</span>
<span class="t" id="p1" style="left:535.99px;top:1579.15px;font-size:24.4px;color:#1c2a45;font-weight:bold;-webkit-text-stroke:0.6px #1c2a45;transform:scaleX(1.0073)">1 - 25 of 888</span>
<span class="t" id="p2" style="left:3039.77px;top:1579.15px;font-size:24.4px;color:#1c2a45;font-weight:bold;-webkit-text-stroke:0.6px #1c2a45;transform:scaleX(0.7155)">1</span>
<span class="t" id="p3" style="left:3196.50px;top:1579.15px;font-size:24.4px;color:#3f47bd;font-weight:bold;-webkit-text-stroke:0.6px #3f47bd;transform:scaleX(0.9708)">36</span>
<span class="t" id="b_cp" style="left:552.00px;top:1706.25px;font-size:24.4px;color:#ffffff;font-weight:bold;-webkit-text-stroke:0.6px #ffffff;transform:scaleX(1.0123)">Complete Purchase</span>
<span class="t" id="b_ca" style="left:848.00px;top:1706.25px;font-size:24.4px;color:#3d46c2;font-weight:bold;-webkit-text-stroke:0.6px #3d46c2;transform:scaleX(0.9849)">Cancel</span>
</body></html>
